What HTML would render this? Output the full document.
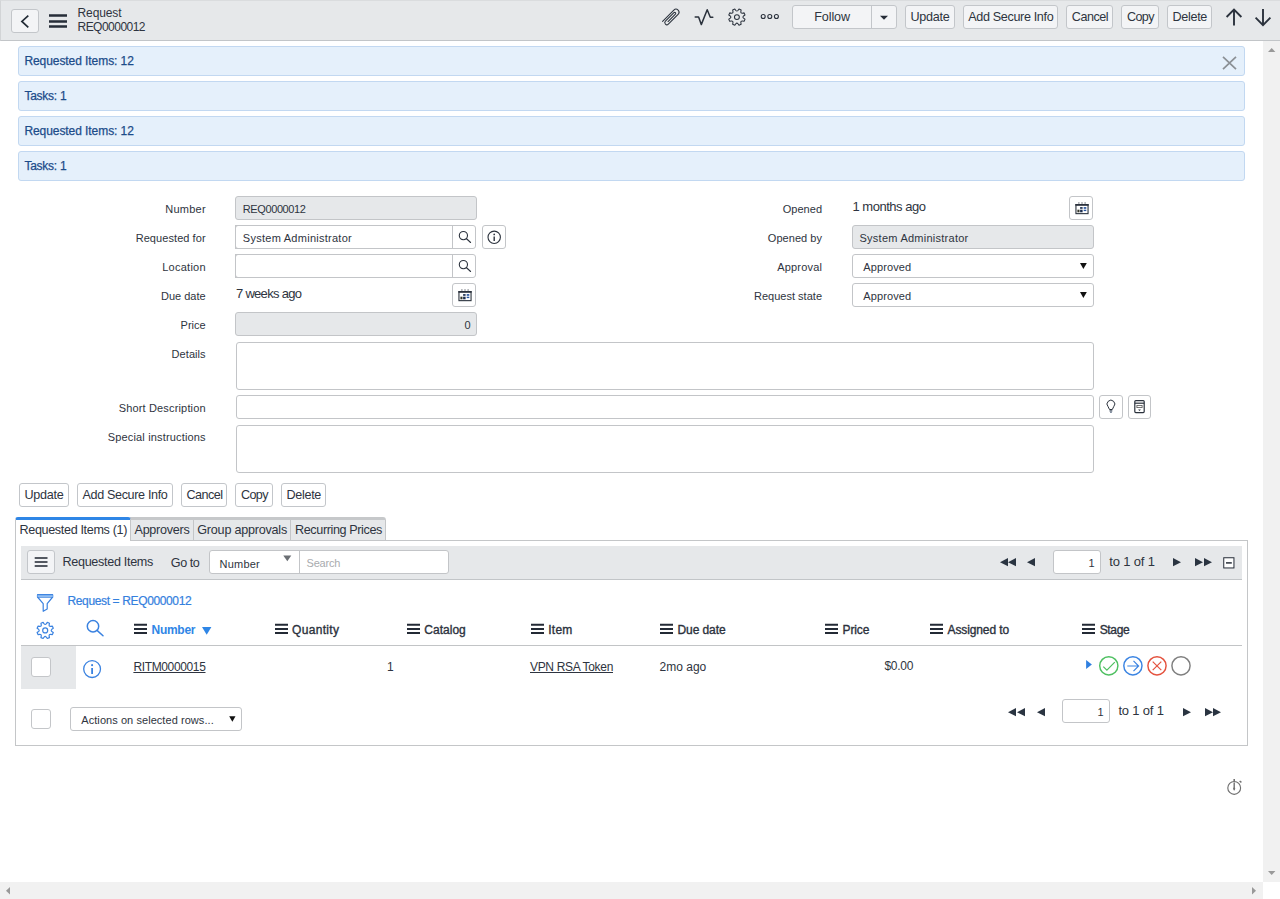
<!DOCTYPE html>
<html lang="en"><head><meta charset="utf-8"><title>Request REQ0000012</title>
<style>
html,body{margin:0;padding:0;}
body{width:1280px;height:899px;overflow:hidden;position:relative;background:#fff;
  font-family:"Liberation Sans",sans-serif;font-size:12px;color:#2e3440;}
.b{position:absolute;box-sizing:border-box;display:block;}
.t{position:absolute;white-space:nowrap;line-height:20px;height:20px;}
.u{text-decoration:underline;text-underline-offset:1px;}

</style></head>
<body>
<div class="b" style="left:0px;top:0px;width:1280px;height:41px;background:#e6e8ea;border-bottom:1px solid #c2c5c8;border-top:1px solid #dadcde;border-left:1px solid #d2d4d6;"></div>
<div class="b" style="left:11px;top:9px;width:28px;height:24px;background:#f3f4f6;border:1px solid #c3c6ca;border-radius:3px;"></div>
<svg class="b" style="left:11px;top:9px;" width="28" height="24" viewBox="0 0 28 24"><path d="M17.3 6.6 L10.9 12.4 L17.3 18.3" fill="none" stroke="#222b36" stroke-width="1.7"/></svg>
<svg class="b" style="left:48px;top:12px;" width="20" height="18" viewBox="0 0 20 18"><path d="M1 3.4H19M1 9.5H19M1 14.6H19" stroke="#262d38" stroke-width="2.5" fill="none"/></svg>
<span class="t" style="top:3.01px;font-size:12px;color:#2e3440;letter-spacing:-0.100px;left:77.50px;">Request</span>
<span class="t" style="top:17.01px;font-size:12px;color:#2e3440;letter-spacing:-0.523px;left:77.50px;">REQ0000012</span>
<div class="b" style="left:792px;top:5px;width:105px;height:24px;background:#f3f4f6;border:1px solid #c3c6ca;border-radius:3px;"></div>
<div class="b" style="left:871px;top:6px;width:1px;height:22px;background:#c3c6ca;"></div>
<span class="t" style="top:7.31px;font-size:12.6px;color:#2e3440;letter-spacing:-0.118px;left:814.30px;">Follow</span>
<svg class="b" style="left:879px;top:15px;" width="10" height="6" viewBox="0 0 10 6"><path d="M1 0.8H9L5 4.8Z" fill="#262d38"/></svg>
<div class="b" style="left:905px;top:5px;width:50px;height:24px;background:#f3f4f6;border:1px solid #c3c6ca;border-radius:3px;"></div>
<span class="t" style="top:7.31px;font-size:12.6px;color:#2e3440;letter-spacing:-0.271px;left:910.50px;">Update</span>
<div class="b" style="left:963px;top:5px;width:95px;height:24px;background:#f3f4f6;border:1px solid #c3c6ca;border-radius:3px;"></div>
<span class="t" style="top:7.31px;font-size:12.6px;color:#2e3440;letter-spacing:-0.355px;left:968.30px;">Add Secure Info</span>
<div class="b" style="left:1066px;top:5px;width:47px;height:24px;background:#f3f4f6;border:1px solid #c3c6ca;border-radius:3px;"></div>
<span class="t" style="top:7.31px;font-size:12.6px;color:#2e3440;letter-spacing:-0.501px;left:1071.80px;">Cancel</span>
<div class="b" style="left:1121px;top:5px;width:38px;height:24px;background:#f3f4f6;border:1px solid #c3c6ca;border-radius:3px;"></div>
<span class="t" style="top:7.31px;font-size:12.6px;color:#2e3440;letter-spacing:-0.652px;left:1127.00px;">Copy</span>
<div class="b" style="left:1167px;top:5px;width:45px;height:24px;background:#f3f4f6;border:1px solid #c3c6ca;border-radius:3px;"></div>
<span class="t" style="top:7.31px;font-size:12.6px;color:#2e3440;letter-spacing:-0.318px;left:1172.50px;">Delete</span>
<div class="b" style="left:18px;top:46px;width:1227px;height:30px;background:#e5f0fb;border:1px solid #c2d8f1;border-radius:3px;"></div>
<span class="t" style="top:51.01px;font-size:12px;color:#1c4c8a;letter-spacing:-0.070px;left:24.40px;-webkit-text-stroke:0.25px #1c4c8a;">Requested Items: 12</span>
<div class="b" style="left:18px;top:81px;width:1227px;height:30px;background:#e5f0fb;border:1px solid #c2d8f1;border-radius:3px;"></div>
<span class="t" style="top:86.01px;font-size:12px;color:#1c4c8a;letter-spacing:-0.239px;left:24.40px;-webkit-text-stroke:0.25px #1c4c8a;">Tasks: 1</span>
<div class="b" style="left:18px;top:116px;width:1227px;height:30px;background:#e5f0fb;border:1px solid #c2d8f1;border-radius:3px;"></div>
<span class="t" style="top:121.01px;font-size:12px;color:#1c4c8a;letter-spacing:-0.070px;left:24.40px;-webkit-text-stroke:0.25px #1c4c8a;">Requested Items: 12</span>
<div class="b" style="left:18px;top:151px;width:1227px;height:30px;background:#e5f0fb;border:1px solid #c2d8f1;border-radius:3px;"></div>
<span class="t" style="top:156.01px;font-size:12px;color:#1c4c8a;letter-spacing:-0.239px;left:24.40px;-webkit-text-stroke:0.25px #1c4c8a;">Tasks: 1</span>
<svg class="b" style="left:1222px;top:56px;" width="15" height="14" viewBox="0 0 15 14"><path d="M1 0.8L14 13.2M14 0.8L1 13.2" stroke="#8b9095" stroke-width="1.7" fill="none"/></svg>
<span class="t" style="top:199.00px;font-size:11px;color:#2e3440;letter-spacing:0.246px;right:1074.15px;">Number</span>
<div class="b" style="left:235px;top:196px;width:242px;height:24px;background:#e6e8ea;border:1px solid #c3c5c8;border-radius:3px;"></div>
<span class="t" style="top:199.00px;font-size:11px;color:#2e3440;letter-spacing:-0.397px;left:242.80px;">REQ0000012</span>
<span class="t" style="top:228.00px;font-size:11px;color:#2e3440;letter-spacing:0.069px;right:1074.33px;">Requested for</span>
<div class="b" style="left:235px;top:225px;width:218px;height:24px;background:#fff;border:1px solid #c3c5c8;"></div>
<div class="b" style="left:235px;top:225px;width:241px;height:24px;border:1px solid #c3c5c8;border-radius:3px;"></div>
<span class="t" style="top:228.00px;font-size:11px;color:#2e3440;letter-spacing:0.264px;left:242.80px;">System Administrator</span>
<div class="b" style="left:482px;top:225px;width:24px;height:24px;background:#fff;border:1px solid #c3c5c8;border-radius:3px;"></div>
<span class="t" style="top:257.00px;font-size:11px;color:#2e3440;letter-spacing:0.263px;right:1074.14px;">Location</span>
<div class="b" style="left:235px;top:254px;width:218px;height:24px;background:#fff;border:1px solid #c3c5c8;"></div>
<div class="b" style="left:235px;top:254px;width:241px;height:24px;border:1px solid #c3c5c8;border-radius:3px;"></div>
<span class="t" style="top:286.00px;font-size:11px;color:#2e3440;letter-spacing:0.005px;right:1074.39px;">Due date</span>
<span class="t" style="top:284.40px;font-size:13px;color:#2e3440;letter-spacing:-0.709px;left:236.00px;">7 weeks ago</span>
<div class="b" style="left:452px;top:283px;width:24px;height:24px;background:#fff;border:1px solid #c3c5c8;border-radius:3px;"></div>
<span class="t" style="top:315.00px;font-size:11px;color:#2e3440;letter-spacing:-0.013px;right:1074.41px;">Price</span>
<div class="b" style="left:235px;top:312px;width:242px;height:24px;background:#e6e8ea;border:1px solid #c3c5c8;border-radius:3px;"></div>
<span class="t" style="top:315.00px;font-size:11px;color:#2e3440;right:809.30px;">0</span>
<span class="t" style="top:199.00px;font-size:11px;color:#2e3440;letter-spacing:0.041px;right:457.96px;">Opened</span>
<span class="t" style="top:197.40px;font-size:13px;color:#2e3440;letter-spacing:-0.473px;left:852.40px;">1 months ago</span>
<div class="b" style="left:1069px;top:196px;width:24px;height:24px;background:#fff;border:1px solid #c3c5c8;border-radius:3px;"></div>
<span class="t" style="top:228.00px;font-size:11px;color:#2e3440;letter-spacing:0.041px;right:457.96px;">Opened by</span>
<div class="b" style="left:852px;top:225px;width:242px;height:24px;background:#e6e8ea;border:1px solid #c3c5c8;border-radius:3px;"></div>
<span class="t" style="top:228.00px;font-size:11px;color:#2e3440;letter-spacing:0.254px;left:859.50px;">System Administrator</span>
<span class="t" style="top:257.00px;font-size:11px;color:#2e3440;letter-spacing:0.197px;right:457.80px;">Approval</span>
<div class="b" style="left:852px;top:254px;width:242px;height:24px;background:#fff;border:1px solid #c3c5c8;border-radius:3px;"></div>
<span class="t" style="top:257.00px;font-size:11px;color:#2e3440;letter-spacing:0.126px;left:863.20px;">Approved</span>
<svg class="b" style="left:1079px;top:262px;" width="9" height="8" viewBox="0 0 9 8"><path d="M1 1H7.8L4.4 7Z" fill="#111"/></svg>
<span class="t" style="top:286.00px;font-size:11px;color:#2e3440;letter-spacing:0.010px;right:457.99px;">Request state</span>
<div class="b" style="left:852px;top:283px;width:242px;height:24px;background:#fff;border:1px solid #c3c5c8;border-radius:3px;"></div>
<span class="t" style="top:286.00px;font-size:11px;color:#2e3440;letter-spacing:0.126px;left:863.20px;">Approved</span>
<svg class="b" style="left:1079px;top:291px;" width="9" height="8" viewBox="0 0 9 8"><path d="M1 1H7.8L4.4 7Z" fill="#111"/></svg>
<span class="t" style="top:344.00px;font-size:11px;color:#2e3440;letter-spacing:0.068px;right:1074.33px;">Details</span>
<div class="b" style="left:236px;top:342px;width:858px;height:48px;background:#fff;border:1px solid #c3c5c8;border-radius:3px;"></div>
<span class="t" style="top:398.00px;font-size:11px;color:#2e3440;letter-spacing:0.160px;right:1074.24px;">Short Description</span>
<div class="b" style="left:236px;top:395px;width:858px;height:24px;background:#fff;border:1px solid #c3c5c8;border-radius:3px;"></div>
<div class="b" style="left:1099px;top:395px;width:24px;height:24px;background:#fff;border:1px solid #c3c5c8;border-radius:3px;"></div>
<div class="b" style="left:1128px;top:395px;width:23px;height:24px;background:#fff;border:1px solid #c3c5c8;border-radius:3px;"></div>
<span class="t" style="top:426.71px;font-size:11px;color:#2e3440;letter-spacing:0.166px;right:1074.23px;">Special instructions</span>
<div class="b" style="left:236px;top:425px;width:858px;height:48px;background:#fff;border:1px solid #c3c5c8;border-radius:3px;"></div>
<div class="b" style="left:19px;top:483px;width:50px;height:24px;background:#fff;border:1px solid #c3c6ca;border-radius:3px;"></div>
<span class="t" style="top:485.31px;font-size:12.6px;color:#2e3440;letter-spacing:-0.271px;left:24.50px;">Update</span>
<div class="b" style="left:77px;top:483px;width:96px;height:24px;background:#fff;border:1px solid #c3c6ca;border-radius:3px;"></div>
<span class="t" style="top:485.31px;font-size:12.6px;color:#2e3440;letter-spacing:-0.355px;left:82.50px;">Add Secure Info</span>
<div class="b" style="left:181px;top:483px;width:46px;height:24px;background:#fff;border:1px solid #c3c6ca;border-radius:3px;"></div>
<span class="t" style="top:485.31px;font-size:12.6px;color:#2e3440;letter-spacing:-0.534px;left:186.50px;">Cancel</span>
<div class="b" style="left:235px;top:483px;width:38px;height:24px;background:#fff;border:1px solid #c3c6ca;border-radius:3px;"></div>
<span class="t" style="top:485.31px;font-size:12.6px;color:#2e3440;letter-spacing:-0.652px;left:241.00px;">Copy</span>
<div class="b" style="left:281px;top:483px;width:45px;height:24px;background:#fff;border:1px solid #c3c6ca;border-radius:3px;"></div>
<span class="t" style="top:485.31px;font-size:12.6px;color:#2e3440;letter-spacing:-0.318px;left:286.50px;">Delete</span>
<div class="b" style="left:15px;top:540px;width:1233px;height:206px;background:#fff;border:1px solid #c4c6c8;"></div>
<div class="b" style="left:130px;top:517px;width:256px;height:24px;background:#e6e8ea;border-top:3px solid #c6c8ca;border-right:1px solid #c4c6c8;border-bottom:1px solid #c4c6c8;border-radius:0 3px 0 0;"></div>
<div class="b" style="left:193px;top:520px;width:1px;height:20px;background:#c4c6c8;"></div>
<div class="b" style="left:290px;top:520px;width:1px;height:20px;background:#c4c6c8;"></div>
<div class="b" style="left:15px;top:517px;width:116px;height:24px;background:#fff;border-top:3px solid #2f86e6;border-left:1px solid #c4c6c8;border-right:1px solid #c4c6c8;border-radius:3px 3px 0 0;"></div>
<span class="t" style="top:520.42px;font-size:12.6px;color:#2e3440;letter-spacing:-0.348px;left:19.50px;">Requested Items (1)</span>
<span class="t" style="top:520.42px;font-size:12.6px;color:#2e3440;letter-spacing:-0.267px;left:134.50px;">Approvers</span>
<span class="t" style="top:520.42px;font-size:12.6px;color:#2e3440;letter-spacing:-0.227px;left:197.30px;">Group approvals</span>
<span class="t" style="top:520.42px;font-size:12.6px;color:#2e3440;letter-spacing:-0.381px;left:295.00px;">Recurring Prices</span>
<div class="b" style="left:21px;top:546px;width:1221px;height:34px;background:#e6e8ea;border-bottom:1px solid #c2c5c8;"></div>
<div class="b" style="left:27px;top:550px;width:28px;height:24px;background:#f3f4f6;border:1px solid #c3c6ca;border-radius:3px;"></div>
<svg class="b" style="left:27px;top:550px;" width="28" height="24" viewBox="0 0 28 24"><path d="M7.7 8H20.5M7.7 12H20.5M7.7 16H20.5" stroke="#1f2530" stroke-width="1.6" fill="none"/></svg>
<span class="t" style="top:552.31px;font-size:12.6px;color:#2e3440;letter-spacing:-0.315px;left:62.50px;">Requested Items</span>
<span class="t" style="top:552.51px;font-size:12.6px;color:#2e3440;letter-spacing:-0.463px;left:170.80px;">Go to</span>
<div class="b" style="left:209px;top:550px;width:240px;height:23.5px;background:#fff;border:1px solid #c3c5c8;border-radius:3px;"></div>
<div class="b" style="left:299px;top:551px;width:1px;height:22px;background:#c3c5c8;"></div>
<span class="t" style="top:553.61px;font-size:11px;color:#2e3440;letter-spacing:0.213px;left:219.60px;">Number</span>
<svg class="b" style="left:283px;top:555px;" width="9" height="7" viewBox="0 0 9 7"><path d="M0.3 0.5H8.3L4.3 6.2Z" fill="#6b6f74"/></svg>
<span class="t" style="top:553.00px;font-size:11px;color:#a8abae;letter-spacing:-0.177px;left:306.50px;">Search</span>
<svg class="b" style="left:999.5px;top:558.4px;" width="8" height="8.3" viewBox="0 0 8 8.3"><path d="M8 0V8.3L0 4.15Z" fill="#2a3441"/></svg>
<svg class="b" style="left:1008px;top:558.4px;" width="8" height="8.3" viewBox="0 0 8 8.3"><path d="M8 0V8.3L0 4.15Z" fill="#2a3441"/></svg>
<svg class="b" style="left:1027.3px;top:558.4px;" width="8" height="8.3" viewBox="0 0 8 8.3"><path d="M8 0V8.3L0 4.15Z" fill="#2a3441"/></svg>
<svg class="b" style="left:1173.2px;top:558.4px;" width="8" height="8.3" viewBox="0 0 8 8.3"><path d="M0 0V8.3L8 4.15Z" fill="#2a3441"/></svg>
<svg class="b" style="left:1195.4px;top:558.4px;" width="8" height="8.3" viewBox="0 0 8 8.3"><path d="M0 0V8.3L8 4.15Z" fill="#2a3441"/></svg>
<svg class="b" style="left:1203.8px;top:558.4px;" width="8" height="8.3" viewBox="0 0 8 8.3"><path d="M0 0V8.3L8 4.15Z" fill="#2a3441"/></svg>
<div class="b" style="left:1053px;top:550px;width:48px;height:23.5px;background:#fff;border:1px solid #c3c5c8;border-radius:3px;"></div>
<span class="t" style="top:553.11px;font-size:11px;color:#2e3440;right:185.50px;">1</span>
<span class="t" style="top:552.10px;font-size:13px;color:#2e3440;letter-spacing:-0.176px;left:1109.30px;">to 1 of 1</span>
<svg class="b" style="left:1223px;top:557px;" width="12" height="12" viewBox="0 0 12 12"><rect x="0.75" y="0.75" width="10.2" height="10.2" fill="#fff" stroke="#262d38" stroke-width="1"/><path d="M3 5.9H8.8" stroke="#262d38" stroke-width="1.5"/></svg>
<span class="t" style="top:591.01px;font-size:12px;color:#3480de;letter-spacing:-0.365px;left:67.50px;-webkit-text-stroke:0.2px #3480de;">Request = REQ0000012</span>
<svg class="b" style="left:134px;top:623.1px;" width="13" height="12" viewBox="0 0 13 12"><path d="M0 1.8H13M0 6H13M0 10.1H13" stroke="#232a35" stroke-width="2" fill="none"/></svg>
<span class="t" style="top:620.21px;font-size:12px;color:#2f86e6;font-weight:700;letter-spacing:-0.274px;left:151.50px;">Number</span>
<svg class="b" style="left:202px;top:626.6px;" width="10" height="8" viewBox="0 0 10 8"><path d="M0 0H9.4L4.7 7.8Z" fill="#2f86e6"/></svg>
<svg class="b" style="left:275px;top:623.1px;" width="13" height="12" viewBox="0 0 13 12"><path d="M0 1.8H13M0 6H13M0 10.1H13" stroke="#232a35" stroke-width="2" fill="none"/></svg>
<span class="t" style="top:620.21px;font-size:12px;color:#2b313c;letter-spacing:0.325px;left:292.00px;-webkit-text-stroke:0.35px #2b313c;">Quantity</span>
<svg class="b" style="left:407px;top:623.1px;" width="13" height="12" viewBox="0 0 13 12"><path d="M0 1.8H13M0 6H13M0 10.1H13" stroke="#232a35" stroke-width="2" fill="none"/></svg>
<span class="t" style="top:620.21px;font-size:12px;color:#2b313c;letter-spacing:0.018px;left:424.30px;-webkit-text-stroke:0.35px #2b313c;">Catalog</span>
<svg class="b" style="left:530.8px;top:623.1px;" width="13" height="12" viewBox="0 0 13 12"><path d="M0 1.8H13M0 6H13M0 10.1H13" stroke="#232a35" stroke-width="2" fill="none"/></svg>
<span class="t" style="top:620.21px;font-size:12px;color:#2b313c;letter-spacing:0.214px;left:548.30px;-webkit-text-stroke:0.35px #2b313c;">Item</span>
<svg class="b" style="left:660px;top:623.1px;" width="13" height="12" viewBox="0 0 13 12"><path d="M0 1.8H13M0 6H13M0 10.1H13" stroke="#232a35" stroke-width="2" fill="none"/></svg>
<span class="t" style="top:620.21px;font-size:12px;color:#2b313c;letter-spacing:-0.088px;left:677.50px;-webkit-text-stroke:0.35px #2b313c;">Due date</span>
<svg class="b" style="left:825px;top:623.1px;" width="13" height="12" viewBox="0 0 13 12"><path d="M0 1.8H13M0 6H13M0 10.1H13" stroke="#232a35" stroke-width="2" fill="none"/></svg>
<span class="t" style="top:620.21px;font-size:12px;color:#2b313c;letter-spacing:-0.109px;left:842.50px;-webkit-text-stroke:0.35px #2b313c;">Price</span>
<svg class="b" style="left:929.5px;top:623.1px;" width="13" height="12" viewBox="0 0 13 12"><path d="M0 1.8H13M0 6H13M0 10.1H13" stroke="#232a35" stroke-width="2" fill="none"/></svg>
<span class="t" style="top:620.21px;font-size:12px;color:#2b313c;letter-spacing:-0.111px;left:947.50px;-webkit-text-stroke:0.35px #2b313c;">Assigned to</span>
<svg class="b" style="left:1082px;top:623.1px;" width="13" height="12" viewBox="0 0 13 12"><path d="M0 1.8H13M0 6H13M0 10.1H13" stroke="#232a35" stroke-width="2" fill="none"/></svg>
<span class="t" style="top:620.21px;font-size:12px;color:#2b313c;letter-spacing:-0.332px;left:1099.70px;-webkit-text-stroke:0.35px #2b313c;">Stage</span>
<div class="b" style="left:21px;top:645px;width:1221px;height:1px;background:#c2c4c6;"></div>
<div class="b" style="left:21px;top:646px;width:55px;height:43px;background:#e6e8ea;"></div>
<div class="b" style="left:31px;top:657px;width:20px;height:20px;background:#fff;border:1px solid #c4c6c9;border-radius:3px;"></div>
<span class="t u" style="top:656.60px;font-size:12px;color:#2e3440;letter-spacing:-0.359px;left:133.40px;">RITM0000015</span>
<span class="t" style="top:656.71px;font-size:12px;color:#2e3440;left:387.00px;">1</span>
<span class="t u" style="top:656.71px;font-size:12px;color:#2e3440;letter-spacing:-0.321px;left:530.00px;">VPN RSA Token</span>
<span class="t" style="top:656.71px;font-size:12px;color:#2e3440;letter-spacing:0.014px;left:659.50px;">2mo ago</span>
<span class="t" style="top:655.60px;font-size:12px;color:#2e3440;letter-spacing:-0.266px;left:884.40px;">$0.00</span>
<div class="b" style="left:31px;top:709px;width:20px;height:20px;background:#fff;border:1px solid #c4c6c9;border-radius:3px;"></div>
<div class="b" style="left:70px;top:707px;width:172px;height:24px;background:#fff;border:1px solid #c3c5c8;border-radius:3px;"></div>
<span class="t" style="top:709.80px;font-size:11px;color:#2e3440;letter-spacing:0.061px;left:81.30px;">Actions on selected rows...</span>
<svg class="b" style="left:228.5px;top:716px;" width="7" height="6" viewBox="0 0 7 6"><path d="M0.2 0.2H6.5L3.35 5.7Z" fill="#111"/></svg>
<svg class="b" style="left:1008.4px;top:708.3px;" width="8" height="8.3" viewBox="0 0 8 8.3"><path d="M8 0V8.3L0 4.15Z" fill="#2a3441"/></svg>
<svg class="b" style="left:1017px;top:708.3px;" width="8" height="8.3" viewBox="0 0 8 8.3"><path d="M8 0V8.3L0 4.15Z" fill="#2a3441"/></svg>
<svg class="b" style="left:1036.5px;top:708.3px;" width="8" height="8.3" viewBox="0 0 8 8.3"><path d="M8 0V8.3L0 4.15Z" fill="#2a3441"/></svg>
<svg class="b" style="left:1182.5px;top:708.3px;" width="8" height="8.3" viewBox="0 0 8 8.3"><path d="M0 0V8.3L8 4.15Z" fill="#2a3441"/></svg>
<svg class="b" style="left:1204.7px;top:708.3px;" width="8" height="8.3" viewBox="0 0 8 8.3"><path d="M0 0V8.3L8 4.15Z" fill="#2a3441"/></svg>
<svg class="b" style="left:1213px;top:708.3px;" width="8" height="8.3" viewBox="0 0 8 8.3"><path d="M0 0V8.3L8 4.15Z" fill="#2a3441"/></svg>
<div class="b" style="left:1062px;top:699px;width:48px;height:23.5px;background:#fff;border:1px solid #c3c5c8;border-radius:3px;"></div>
<span class="t" style="top:701.71px;font-size:11px;color:#2e3440;right:176.50px;">1</span>
<span class="t" style="top:700.71px;font-size:13px;color:#2e3440;letter-spacing:-0.176px;left:1118.40px;">to 1 of 1</span>
<div class="b" style="left:1263px;top:41px;width:17px;height:841px;background:#f1f1f1;"></div>
<div class="b" style="left:0px;top:882px;width:1263px;height:17px;background:#f1f1f1;"></div>
<svg class="b" style="left:1268px;top:48px;" width="8" height="4" viewBox="0 0 8 4"><path d="M0 4H7.4L3.7 0Z" fill="#999999"/></svg>
<svg class="b" style="left:1268px;top:871px;" width="8" height="4" viewBox="0 0 8 4"><path d="M0 0H7.4L3.7 4Z" fill="#999999"/></svg>
<svg class="b" style="left:6px;top:887px;" width="4" height="8" viewBox="0 0 4 8"><path d="M4 0V7.4L0 3.7Z" fill="#999999"/></svg>
<svg class="b" style="left:1252px;top:887px;" width="4" height="8" viewBox="0 0 4 8"><path d="M0 0V7.4L4 3.7Z" fill="#999999"/></svg>
<svg class="b" style="left:0;top:0;pointer-events:none" width="1280" height="899" viewBox="0 0 1280 899"><g transform="translate(671.3 16.9) rotate(45)"><path d="M-3 9.3V-6.6A3 3 0 0 1 3 -6.6V7.2A2.05 2.05 0 0 1 -1.1 7.2V-4.8A1.05 1.05 0 0 1 1 -4.8V5.6" fill="none" stroke="#2b323d" stroke-width="1.05" stroke-linecap="round"/></g><path d="M695.2 17H698.6L701.3 24.6L707.2 9.8L710.3 17.2H712.8" fill="none" stroke="#2b323d" stroke-width="1.5" stroke-linejoin="round" stroke-linecap="round"/><path d="M738.99 9.02L741.14 9.91L740.84 11.68Q740.72 13.28 742.32 13.16L744.09 12.86L744.98 15.01L743.52 16.05Q742.30 17.10 743.52 18.15L744.98 19.19L744.09 21.34L742.32 21.04Q740.72 20.92 740.84 22.52L741.14 24.29L738.99 25.18L737.95 23.72Q736.90 22.50 735.85 23.72L734.81 25.18L732.66 24.29L732.96 22.52Q733.08 20.92 731.48 21.04L729.71 21.34L728.82 19.19L730.28 18.15Q731.50 17.10 730.28 16.05L728.82 15.01L729.71 12.86L731.48 13.16Q733.08 13.28 732.96 11.68L732.66 9.91L734.81 9.02L735.85 10.48Q736.90 11.70 737.95 10.48Z" fill="none" stroke="#2b323d" stroke-width="1.05" stroke-linejoin="round"/><circle cx="736.9" cy="17.1" r="2.45" fill="none" stroke="#2b323d" stroke-width="1.05"/><circle cx="763.2" cy="16.5" r="2" fill="none" stroke="#2b323d" stroke-width="1.1"/><circle cx="769.8" cy="16.5" r="2" fill="none" stroke="#2b323d" stroke-width="1.1"/><circle cx="776.4" cy="16.5" r="2" fill="none" stroke="#2b323d" stroke-width="1.1"/><path d="M1226.6 17L1234 9.6L1241.4 17M1234 10V25.6" fill="none" stroke="#2b323d" stroke-width="1.9"/><path d="M1255.6 17.7L1263 25.1L1270.4 17.7M1263 9.1V24.7" fill="none" stroke="#2b323d" stroke-width="1.9"/></svg>
<svg class="b" style="left:0;top:0;pointer-events:none" width="1280" height="899" viewBox="0 0 1280 899"><circle cx="463.4" cy="235.6" r="4.1" fill="none" stroke="#2b323d" stroke-width="1.1"/><path d="M466.30 238.50L470.6 242.5" stroke="#2b323d" stroke-width="1.1" stroke-linecap="round"/><circle cx="463.4" cy="264.6" r="4.1" fill="none" stroke="#2b323d" stroke-width="1.1"/><path d="M466.30 267.50L470.6 271.5" stroke="#2b323d" stroke-width="1.1" stroke-linecap="round"/><circle cx="494.2" cy="237.3" r="6.2" fill="none" stroke="#2b323d" stroke-width="1.1"/><circle cx="494.2" cy="234.39" r="0.85" fill="#2b323d"/><path d="M494.2 236.56V240.90" stroke="#2b323d" stroke-width="1.4"/><rect x="458.95" y="291.55" width="12.1" height="9.1" fill="#fff" stroke="#2b323d" stroke-width="1.1"/><path d="M458.4 291.9H471.59999999999997" stroke="#2b323d" stroke-width="1.8"/><path d="M461.9 289V291M465.0 289V291M468.09999999999997 289V291" stroke="#7a7f86" stroke-width="0.9"/><rect x="463.09999999999997" y="294.1" width="2.5" height="1.7" fill="#1d2f4f"/><rect x="466.7" y="294.1" width="2.6" height="1.7" fill="#2a56a0"/><rect x="460.4" y="296.7" width="2.1" height="2.6" fill="#35372a"/><rect x="463.09999999999997" y="296.7" width="2.5" height="2.6" fill="#1d2f4f"/><rect x="466.7" y="296.7" width="2.6" height="1.4" fill="#2a56a0"/><rect x="1075.95" y="204.55" width="12.1" height="9.1" fill="#fff" stroke="#2b323d" stroke-width="1.1"/><path d="M1075.4 204.9H1088.6000000000001" stroke="#2b323d" stroke-width="1.8"/><path d="M1078.9 202V204M1082.0 202V204M1085.1000000000001 202V204" stroke="#7a7f86" stroke-width="0.9"/><rect x="1080.1000000000001" y="207.1" width="2.5" height="1.7" fill="#1d2f4f"/><rect x="1083.7" y="207.1" width="2.6" height="1.7" fill="#2a56a0"/><rect x="1077.4" y="209.7" width="2.1" height="2.6" fill="#35372a"/><rect x="1080.1000000000001" y="209.7" width="2.5" height="2.6" fill="#1d2f4f"/><rect x="1083.7" y="209.7" width="2.6" height="1.4" fill="#2a56a0"/><path d="M1109.5 409.5L1108.1 406.7A3.85 3.85 0 1 1 1113.7 406.7L1112.3 409.5Z" fill="none" stroke="#2b323d" stroke-width="1" stroke-linejoin="round"/><path d="M1109.5 410.9H1112.3" stroke="#3d4a5c" stroke-width="1.2"/><path d="M1110 412.2H1111.9" stroke="#5a6a80" stroke-width="1.1"/><rect x="1134.8" y="400.6" width="9.4" height="12" rx="1" fill="#fff" stroke="#2b323d" stroke-width="1.2"/><path d="M1134.8 403.2H1144.2" stroke="#2b323d" stroke-width="1.2"/><rect x="1136.9" y="405.4" width="5.2" height="2.2" fill="#fff" stroke="#555" stroke-width="0.8"/><path d="M1138.1 409.4H1140.9L1139.5 411Z" fill="#2b323d"/></svg>
<svg class="b" style="left:0;top:0;pointer-events:none" width="1280" height="899" viewBox="0 0 1280 899"><path d="M37.5 594.9H52.7V597L47.2 603.6V609L43.2 611.3V603.6L37.5 597Z" fill="#fff" stroke="#3a82e0" stroke-width="1.2" stroke-linejoin="round"/><path d="M37.5 595.9H52.7" stroke="#9cc6f5" stroke-width="2"/><path d="M37.2 594.7H53" stroke="#3a82e0" stroke-width="1.2"/><path d="M37.6 597.3H52.6" stroke="#3a82e0" stroke-width="0.9"/><path d="M47.29 622.32L49.44 623.21L49.14 624.98Q49.02 626.58 50.62 626.46L52.39 626.16L53.28 628.31L51.82 629.35Q50.60 630.40 51.82 631.45L53.28 632.49L52.39 634.64L50.62 634.34Q49.02 634.22 49.14 635.82L49.44 637.59L47.29 638.48L46.25 637.02Q45.20 635.80 44.15 637.02L43.11 638.48L40.96 637.59L41.26 635.82Q41.38 634.22 39.78 634.34L38.01 634.64L37.12 632.49L38.58 631.45Q39.80 630.40 38.58 629.35L37.12 628.31L38.01 626.16L39.78 626.46Q41.38 626.58 41.26 624.98L40.96 623.21L43.11 622.32L44.15 623.78Q45.20 625.00 46.25 623.78Z" fill="none" stroke="#3a82e0" stroke-width="1.2" stroke-linejoin="round"/><circle cx="45.2" cy="630.4" r="2.5" fill="none" stroke="#3a82e0" stroke-width="1.2"/><circle cx="93" cy="626.3" r="5.7" fill="none" stroke="#3a82e0" stroke-width="1.5"/><path d="M97.03 630.33L103 635.8" stroke="#3a82e0" stroke-width="1.5" stroke-linecap="round"/><circle cx="92.1" cy="669.1" r="8.4" fill="none" stroke="#3a82e0" stroke-width="1.3"/><circle cx="92.1" cy="665.15" r="1.05" fill="#3a82e0"/><path d="M92.1 668.09V673.97" stroke="#3a82e0" stroke-width="1.8"/><path d="M1086.1 659.9V669L1091.9 664.45Z" fill="#2f7fe0"/><circle cx="1108.8" cy="665.8" r="9.1" fill="none" stroke="#4fc062" stroke-width="1.45"/><path d="M1103.3 666.6L1106.9 670.2L1114.8 662.1" fill="none" stroke="#4fc062" stroke-width="1.2"/><circle cx="1132.9" cy="665.8" r="9.1" fill="none" stroke="#3b84e2" stroke-width="1.45"/><path d="M1127.3 666H1138.4M1133.5 660.9L1138.6 666L1133.5 671.1" fill="none" stroke="#3b84e2" stroke-width="1.2"/><circle cx="1157" cy="665.8" r="9.1" fill="none" stroke="#e4523e" stroke-width="1.45"/><path d="M1152.7 661.6L1161.3 670.2M1161.3 661.6L1152.7 670.2" fill="none" stroke="#e4523e" stroke-width="1.2"/><circle cx="1181" cy="665.8" r="9.1" fill="none" stroke="#7f7f7f" stroke-width="1.45"/><circle cx="1234.2" cy="787.9" r="6.4" fill="none" stroke="#707070" stroke-width="1.15"/><path d="M1234.2 779.1V781.4" stroke="#707070" stroke-width="1.6"/><path d="M1239.6 781L1241.4 782.3" stroke="#707070" stroke-width="1.5"/><path d="M1234.2 783V789.8" stroke="#707070" stroke-width="1.4" stroke-linecap="round"/><circle cx="1234.2" cy="788.6" r="1.05" fill="#707070"/></svg>
</body></html>
